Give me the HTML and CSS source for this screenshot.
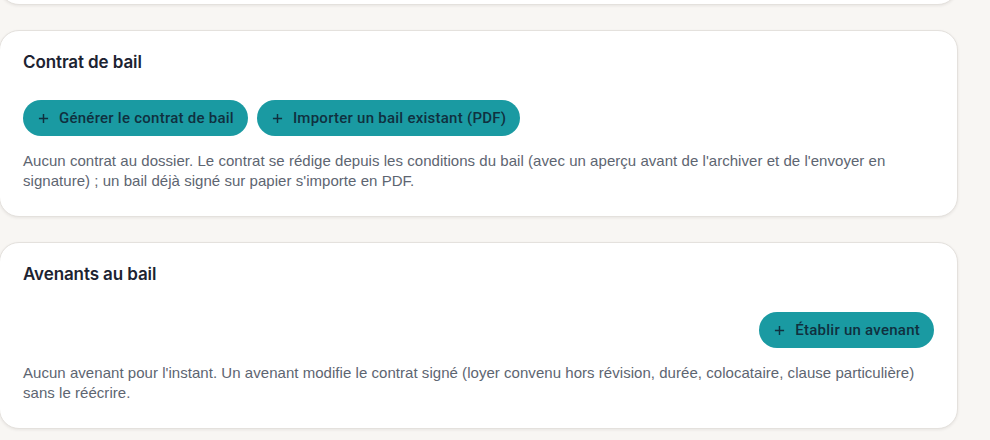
FILE: index.html
```html
<!DOCTYPE html>
<html lang="fr">
<head>
<meta charset="utf-8">
<title>Bail</title>
<link rel="stylesheet" href="styles.css">
</head>
<body>
<main class="stack">
  <section class="card card-prev"></section>

  <section class="card">
    <h2 class="card-title">Contrat de bail</h2>
    <div class="actions">
      <button class="btn" type="button">
        <svg class="btn-icon" viewBox="0 0 12 12" aria-hidden="true"><path d="M6 1v10M1 6h10"/></svg>
        Générer le contrat de bail
      </button>
      <button class="btn" type="button">
        <svg class="btn-icon" viewBox="0 0 12 12" aria-hidden="true"><path d="M6 1v10M1 6h10"/></svg>
        Importer un bail existant (PDF)
      </button>
    </div>
    <p class="note">Aucun contrat au dossier. Le contrat se rédige depuis les conditions du bail (avec un aperçu avant de l'archiver et de l'envoyer en signature) ; un bail déjà signé sur papier s'importe en PDF.</p>
  </section>

  <section class="card">
    <h2 class="card-title">Avenants au bail</h2>
    <div class="actions actions-end">
      <button class="btn" type="button">
        <svg class="btn-icon" viewBox="0 0 12 12" aria-hidden="true"><path d="M6 1v10M1 6h10"/></svg>
        Établir un avenant
      </button>
    </div>
    <p class="note">Aucun avenant pour l'instant. Un avenant modifie le contrat signé (loyer convenu hors révision, durée, colocataire, clause particulière) sans le réécrire.</p>
  </section>
</main>
</body>
</html>
```
FILE: styles.css
```css
* { box-sizing: border-box; }
html, body { margin: 0; padding: 0; }
body {
  background: #f8f6f3;
  font-family: "Liberation Sans", Arial, sans-serif;
  overflow: hidden;
  height: 440px;
}
.stack {
  width: 959px;
  margin-left: -1px;
  margin-top: -95px;
  display: flex;
  flex-direction: column;
  gap: 25px;
}
.card {
  background: #fff;
  border: 1px solid #e4e1dd;
  border-radius: 20px;
  box-shadow: 0 1px 3px rgba(40, 30, 20, 0.08);
  padding: 22px 23px 25px 23px;
}
.card-prev { height: 100px; }
.card-title {
  margin: 0;
  font-family: Inter, "Noto Sans", sans-serif;
  font-weight: 600;
  font-size: 17px;
  line-height: 18px;
  color: #1c2331;
  letter-spacing: -0.1px;
}
.actions {
  display: flex;
  gap: 9px;
  margin-top: 29px;
}
.actions-end { justify-content: flex-end; }
.btn {
  display: inline-flex;
  align-items: center;
  gap: 10px;
  height: 36px;
  padding: 0 14px 0 15px;
  border: none;
  border-radius: 18px;
  background: #1a9aa2;
  color: #10303f;
  font-family: Roboto, "Liberation Sans", sans-serif;
  font-weight: 500;
  font-size: 15px;
  letter-spacing: 0.25px;
  cursor: pointer;
}
.btn-icon {
  width: 11px;
  height: 11px;
  stroke: #10303f;
  stroke-width: 1.6;
  fill: none;
}
.note {
  margin: 15px 0 0;
  font-size: 15px;
  letter-spacing: 0.04px;
  line-height: 20px;
  color: #5d6571;
}
```
